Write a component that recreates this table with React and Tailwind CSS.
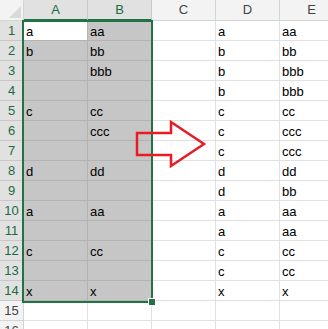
import React from 'react';

const colA = ['a', 'b', '', '', 'c', '', '', 'd', '', 'a', '', 'c', '', 'x'];
const colB = ['aa', 'bb', 'bbb', '', 'cc', 'ccc', '', 'dd', '', 'aa', '', 'cc', '', 'x'];
const colD = ['a', 'b', 'b', 'b', 'c', 'c', 'c', 'd', 'd', 'a', 'a', 'c', 'c', 'x'];
const colE = ['aa', 'bb', 'bbb', 'bbb', 'cc', 'ccc', 'ccc', 'dd', 'bb', 'aa', 'aa', 'cc', 'cc', 'x'];

const ROWS = 16;

// plain worksheet cell, text sits at the bottom like in Excel
const Cell = ({ value, selected, active }) => {
  let tone = 'bg-white border-[#e1e1e1]';
  if (selected && !active) tone = 'bg-[#c6c6c6] border-[#b3b3b3]';
  if (active) tone = 'bg-white border-[#b3b3b3]';
  return (
    <div className={`flex items-end overflow-hidden border-r border-b pl-[2px] pb-[1px] text-[13px] leading-[15px] text-black ${tone}`}>
      {value}
    </div>
  );
};

const ColHeader = ({ label, selected }) => (
  <div
    className={`flex items-center justify-center border-r text-[13px] ${
      selected
        ? 'bg-[#e1e1e1] border-[#c8c8c8] border-b-2 border-b-[#217346] text-[#1d6b40]'
        : 'bg-[#f3f3f3] border-[#d4d4d4] border-b border-b-[#d4d4d4] text-[#444]'
    }`}
  >
    {label}
  </div>
);

const RowHeader = ({ n, selected }) => (
  <div
    className={`flex items-center justify-center border-r border-b text-[13px] ${
      selected ? 'bg-[#e1e1e1] border-[#c8c8c8] text-[#1d6b40]' : 'bg-[#f3f3f3] border-[#d4d4d4] text-[#444]'
    }`}
  >
    {n}
  </div>
);

export default function App() {
  const rows = Array.from({ length: ROWS }, (_, i) => i);

  return (
    <div className="relative w-[328px] h-[329px] overflow-hidden bg-white" style={{ fontFamily: '"Liberation Sans", Arial, sans-serif' }}>
      <div className="grid grid-cols-[24px_64px_64px_64px_64px_64px] grid-rows-[21px_repeat(16,20px)]">
        {/* corner */}
        <div className="relative bg-[#f3f3f3] border-r border-b border-[#d4d4d4]">
          <div className="absolute right-[2px] bottom-[2px] w-0 h-0 border-l-[12px] border-l-transparent border-b-[12px] border-b-[#d9d9d9]" />
        </div>
        <ColHeader label="A" selected />
        <ColHeader label="B" selected />
        <ColHeader label="C" />
        <ColHeader label="D" />
        <ColHeader label="E" />

        {rows.map((i) => {
          const inSel = i < 14;
          return (
            <React.Fragment key={i}>
              <RowHeader n={i + 1} selected={inSel} />
              <Cell value={colA[i] || ''} selected={inSel} active={i === 0} />
              <Cell value={colB[i] || ''} selected={inSel} />
              <Cell value="" />
              <Cell value={colD[i] || ''} />
              <Cell value={colE[i] || ''} />
            </React.Fragment>
          );
        })}
      </div>

      {/* selection outline A1:B14 */}
      <div className="absolute left-[22px] top-[20px] w-[131px] h-[283px] border-2 border-[#217346] pointer-events-none">
        <div className="absolute -right-[4px] -bottom-[4px] w-[6px] h-[6px] bg-[#217346] outline outline-1 outline-white" />
      </div>

      {/* red arrow */}
      <svg className="absolute left-0 top-0 pointer-events-none" width="328" height="329">
        <polygon
          points="137,133 171,133 171,122 204,144 171,166 171,155 137,155"
          fill="none"
          stroke="#e81c24"
          strokeWidth="2.5"
          strokeLinejoin="miter"
        />
      </svg>
    </div>
  );
}
